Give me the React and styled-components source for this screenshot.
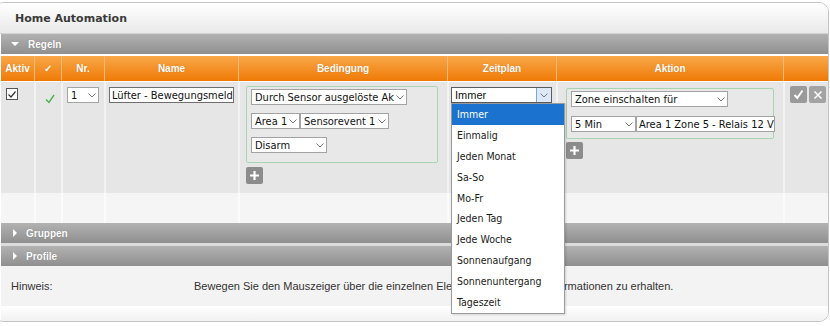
import React from "react";
import styled, { createGlobalStyle } from "styled-components";

const Global = createGlobalStyle`
  html, body { margin: 0; padding: 0; background: #fff; }
  body { width: 830px; height: 326px; overflow: hidden; }
`;

const COLS = "33px 27px 43px 134px 209px 109px 227px 48px";

const Panel = styled.div`
  margin: 2px 0 0 -6px;
  width: 833px;
  border: 1px solid #c4c4c4;
  border-radius: 10px;
  overflow: hidden;
  background: #fff;
  font-family: "Liberation Sans", Arial, sans-serif;
`;

const TitleBar = styled.div`
  height: 30px;
  padding-left: 20px;
  display: flex;
  align-items: center;
  background: linear-gradient(#ffffff, #e9e9e9);
  border-bottom: 1px solid #d2d2d2;
  font-family: "DejaVu Sans", Verdana, sans-serif;
  font-weight: bold;
  font-size: 11px;
  color: #3a3a3a;
`;

const Inner = styled.div`
  margin-left: 6px;
  width: 830px;
`;

const SectionBar = styled.div`
  height: 20px;
  display: flex;
  align-items: center;
  gap: 7px;
  padding-left: 10px;
  background: linear-gradient(#b2b2b2, #8f8f8f);
  border-top: ${(p) => (p.$gap ? "3px solid #dcdcdc" : "none")};
  color: #fff;
  font-weight: bold;
  font-size: 10px;
  text-shadow: 0 0 1px rgba(0, 0, 0, 0.3);
`;

const Tri = styled.span`
  width: 0;
  height: 0;
  ${(p) =>
    p.$open
      ? `border-left: 4px solid transparent; border-right: 4px solid transparent; border-top: 4px solid #fff;`
      : `border-top: 4px solid transparent; border-bottom: 4px solid transparent; border-left: 4px solid #fff; margin-left: 2px;`}
  margin-right: 2px;
`;

const HeadRow = styled.div`
  display: grid;
  grid-template-columns: ${COLS};
  height: 25px;
  margin-top: 2px;
  background: linear-gradient(#f9a84a, #ef7a06);
`;

const HeadCell = styled.div`
  display: flex;
  align-items: center;
  justify-content: center;
  border-left: ${(p) => (p.$first ? "none" : "1px solid #f8bb78")};
  color: #fff;
  font-weight: bold;
  font-size: 10px;
  text-shadow: 0 0 1px rgba(150, 60, 0, 0.4);
`;

const DataRow = styled.div`
  display: grid;
  grid-template-columns: ${COLS};
  height: 111px;
  margin-top: 1px;
`;

const PaleRow = styled.div`
  display: grid;
  grid-template-columns: ${COLS};
  height: 30px;
`;

const Cell = styled.div`
  position: relative;
  background: ${(p) => (p.$pale ? "#f5f5f5" : "#e6e6e6")};
  border-left: ${(p) =>
    p.$first ? "none" : p.$pale ? "2px solid #fbfbfb" : "2px solid #f3f3f3"};
  padding: ${(p) => p.$pad || "0"};
  box-sizing: border-box;
`;

const Check = styled.div`
  width: 10px;
  height: 10px;
  border: 1px solid #555;
  background: #fff;
  margin: 6px 0 0 5px;
  display: flex;
  align-items: center;
  justify-content: center;
`;

const Select = styled.div`
  width: ${(p) => p.$w}px;
  height: 16px;
  box-sizing: border-box;
  display: flex;
  align-items: center;
  background: #fff;
  border: 1px solid ${(p) => (p.$dark ? "#5a5a5a" : "#a3a3a3")};
  font-family: ${(p) =>
    p.$tahoma
      ? `"Liberation Sans", Arial, sans-serif`
      : `"DejaVu Sans Condensed", "DejaVu Sans", sans-serif`};
  font-size: 11px;
  color: #111;
  padding-left: 3px;
  overflow: hidden;
  white-space: nowrap;
  flex-shrink: 0;
`;

const SelText = styled.span`
  flex: 1;
  overflow: hidden;
`;

const Chevron = styled.span`
  width: ${(p) => (p.$boxed ? "15px" : "12px")};
  height: 100%;
  display: flex;
  align-items: center;
  justify-content: center;
  flex-shrink: 0;
  box-sizing: border-box;
  ${(p) =>
    p.$boxed &&
    `background: #dde9f6; border-left: 1px solid #7aa6d6;`}
`;

const Group = styled.div`
  box-sizing: border-box;
  width: ${(p) => p.$w}px;
  height: ${(p) => p.$h}px;
  border: 1px solid #a9d4b4;
  border-radius: 2px;
  background: #e8e8e8;
  padding: 2px 0 0 4px;
  display: flex;
  flex-direction: column;
  gap: ${(p) => p.$gap}px;
`;

const Line = styled.div`
  display: flex;
`;

const IconBtn = styled.div`
  width: 17px;
  height: 17px;
  border-radius: 2px;
  background: ${(p) => p.$bg || "#8c8c8c"};
  display: flex;
  align-items: center;
  justify-content: center;
  margin-top: ${(p) => p.$mt || 0}px;
`;

const BtnRow = styled.div`
  display: flex;
  gap: 2px;
  margin: 4px 0 0 5px;
`;

const Menu = styled.div`
  position: absolute;
  left: 2px;
  top: 21px;
  width: 114px;
  box-sizing: border-box;
  background: #fff;
  border: 1px solid #9a9a9a;
  box-shadow: 1px 1px 2px rgba(0, 0, 0, 0.15);
  z-index: 5;
  padding-bottom: 1px;
`;

const MenuItem = styled.div`
  height: 20.8px;
  display: flex;
  align-items: center;
  padding-left: 5px;
  font-family: "DejaVu Sans Condensed", "DejaVu Sans", sans-serif;
  font-size: 10.5px;
  color: ${(p) => (p.$active ? "#fff" : "#1a1a1a")};
  background: ${(p) => (p.$active ? "#1b72cf" : "transparent")};
`;

const HintRow = styled.div`
  height: 40px;
  background: #f3f3f3;
  display: flex;
  align-items: center;
  font-size: 11px;
  color: #333;
`;

const HintLabel = styled.span`
  width: 193px;
  padding-left: 10px;
  box-sizing: border-box;
`;

const Foot = styled.div`
  height: 15px;
  background: linear-gradient(#ffffff, #f1f1f1);
`;

const ChevronIcon = () => (
  <svg width="8" height="5" viewBox="0 0 8 5">
    <path d="M0.5 0.5 L4 4 L7.5 0.5" fill="none" stroke="#777" strokeWidth="1" />
  </svg>
);

const Plus = () => (
  <svg width="11" height="11" viewBox="0 0 11 11">
    <path d="M5.5 1 V10 M1 5.5 H10" stroke="#fff" strokeWidth="2.2" />
  </svg>
);

const Sel = ({ w, children, boxed, dark, tahoma }) => (
  <Select $w={w} $dark={dark} $tahoma={tahoma}>
    <SelText>{children}</SelText>
    <Chevron $boxed={boxed}>
      <ChevronIcon />
    </Chevron>
  </Select>
);

const Input = styled(Select)`
  padding-left: 2px;
  border-color: ${(p) => p.$border || "#6e6e6e"};
`;

const options = [
  "Immer",
  "Einmalig",
  "Jeden Monat",
  "Sa-So",
  "Mo-Fr",
  "Jeden Tag",
  "Jede Woche",
  "Sonnenaufgang",
  "Sonnenuntergang",
  "Tageszeit",
];

const headers = ["Aktiv", "✓", "Nr.", "Name", "Bedingung", "Zeitplan", "Aktion", ""];

export default function App() {
  return (
    <>
      <Global />
      <Panel>
        <TitleBar>Home Automation</TitleBar>
        <Inner>
          <SectionBar>
            <Tri $open />
            Regeln
          </SectionBar>
          <HeadRow>
            {headers.map((h, i) => (
              <HeadCell key={i} $first={i === 0}>
                {h}
              </HeadCell>
            ))}
          </HeadRow>
          <DataRow>
            <Cell $first>
              <Check>
                <svg width="10" height="9" viewBox="0 0 10 9">
                  <path d="M1.5 4.5 L4 7 L8.5 1.5" fill="none" stroke="#333" strokeWidth="1.2" />
                </svg>
              </Check>
            </Cell>
            <Cell $pad="8px 0 0 9px">
              <svg width="10" height="10" viewBox="0 0 10 10">
                <path d="M1 5.5 L4 8.5 L9 1" fill="none" stroke="#49b04e" strokeWidth="1.4" />
              </svg>
            </Cell>
            <Cell $pad="5px 0 0 4px">
              <Sel w={32}>1</Sel>
            </Cell>
            <Cell $pad="5px 0 0 3px">
              <Input $w={125}>Lüfter - Bewegungsmeldung</Input>
            </Cell>
            <Cell $pad="4px 0 0 6px">
              <Group $w={192} $h={77} $gap={8}>
                <Sel w={156}>Durch Sensor ausgelöste Aktion</Sel>
                <Line>
                  <Sel w={49}>Area 1</Sel>
                  <Sel w={89}>Sensorevent 1</Sel>
                </Line>
                <Sel w={76}>Disarm</Sel>
              </Group>
              <IconBtn $mt={4}>
                <Plus />
              </IconBtn>
            </Cell>
            <Cell $pad="5px 0 0 2px">
              <Sel w={101} boxed dark tahoma>
                Immer
              </Sel>
              <Menu>
                {options.map((o, i) => (
                  <MenuItem key={o} $active={i === 0}>
                    {o}
                  </MenuItem>
                ))}
              </Menu>
            </Cell>
            <Cell $pad="6px 0 0 8px">
              <Group $w={208} $h={51} $gap={9}>
                <Sel w={157}>Zone einschalten für</Sel>
                <Line>
                  <Sel w={65}>5 Min</Sel>
                  <Input $w={139} $border="#a3a3a3">
                    Area 1 Zone 5 - Relais 12 V
                  </Input>
                </Line>
              </Group>
              <IconBtn $mt={3}>
                <Plus />
              </IconBtn>
            </Cell>
            <Cell>
              <BtnRow>
                <IconBtn $bg="#9a9a9a">
                  <svg width="11" height="11" viewBox="0 0 11 11">
                    <path d="M1.5 6 L4.3 9 L9.5 1.5" fill="none" stroke="#fff" strokeWidth="2" />
                  </svg>
                </IconBtn>
                <IconBtn $bg="#a3a3a3">
                  <svg width="10" height="10" viewBox="0 0 10 10">
                    <path d="M1.5 1.5 L8.5 8.5 M8.5 1.5 L1.5 8.5" stroke="#fff" strokeWidth="1.6" />
                  </svg>
                </IconBtn>
              </BtnRow>
            </Cell>
          </DataRow>
          <PaleRow>
            {headers.map((h, i) => (
              <Cell key={i} $pale $first={i === 0} />
            ))}
          </PaleRow>
          <SectionBar>
            <Tri />
            Gruppen
          </SectionBar>
          <SectionBar $gap>
            <Tri />
            Profile
          </SectionBar>
          <HintRow>
            <HintLabel>Hinweis:</HintLabel>
            Bewegen Sie den Mauszeiger über die einzelnen Elemente, um weitere Informationen zu erhalten.
          </HintRow>
          <Foot />
        </Inner>
      </Panel>
    </>
  );
}
